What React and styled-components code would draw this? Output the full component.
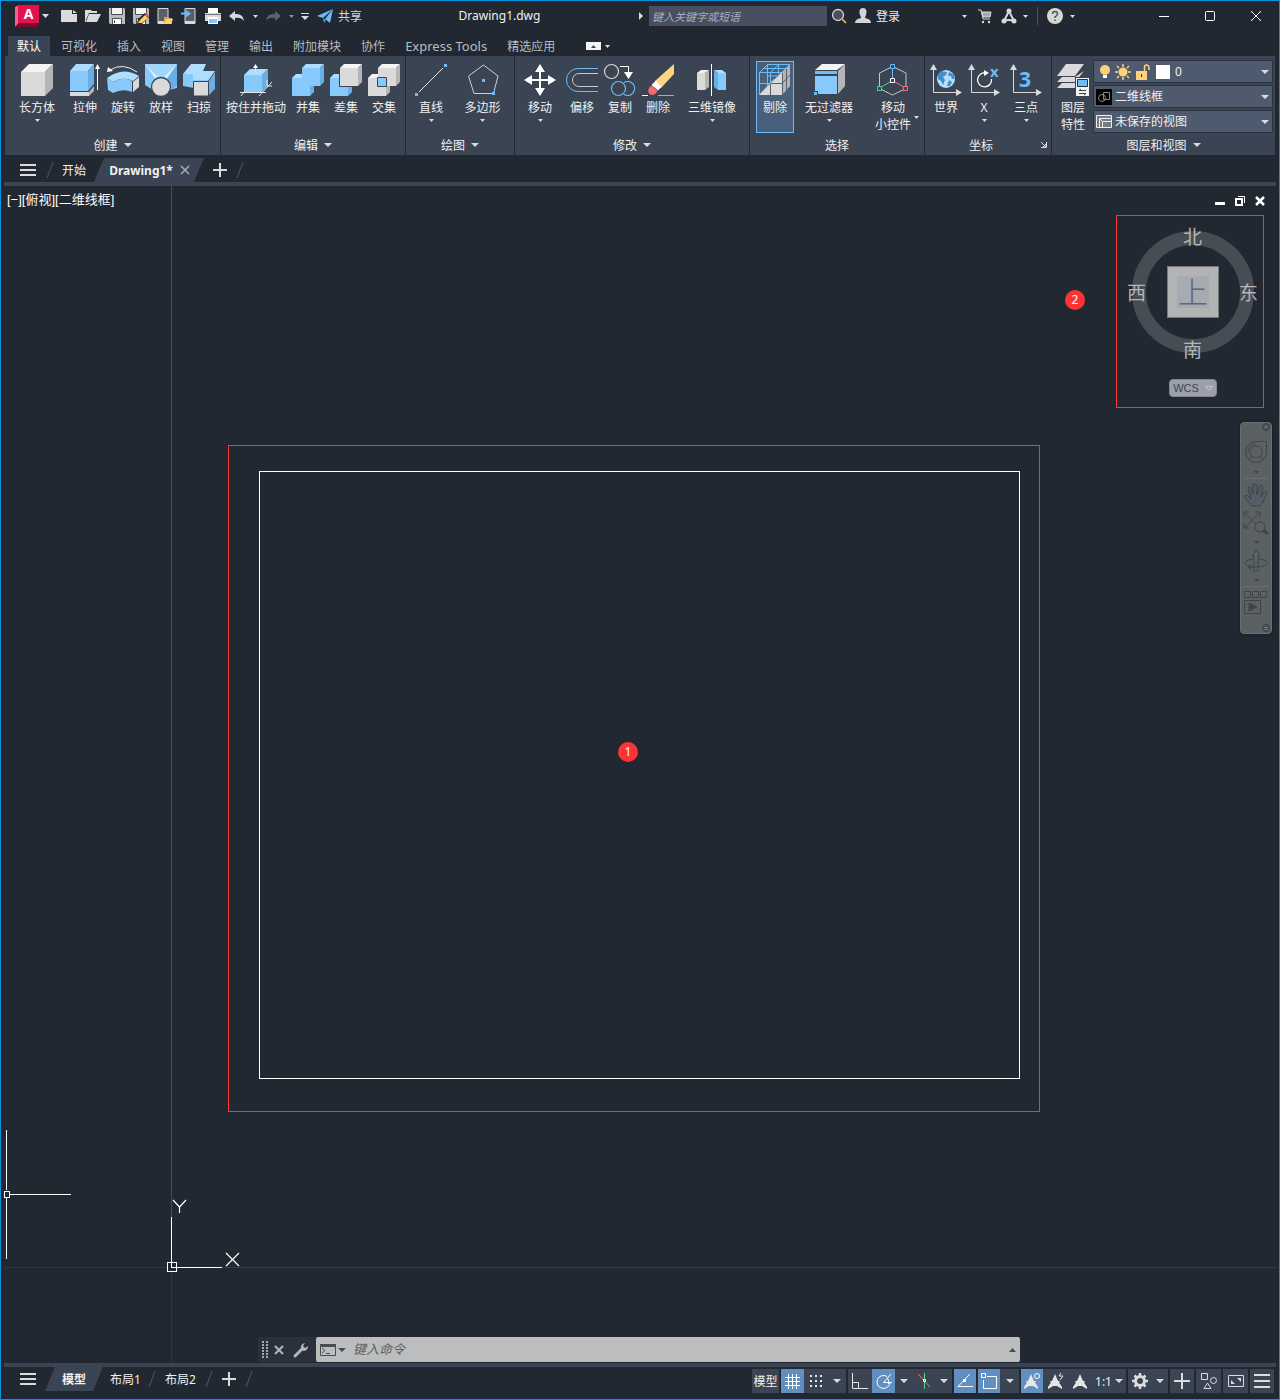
import React from 'react';
import styled, { createGlobalStyle, css } from 'styled-components';

const c = {
  bg: '#222831',
  panel: '#3b4453',
  edge: '#0a93dd',
  text: '#f0f0f0',
  dim: '#b9bdc2',
  icon: '#dcdcdc',
  blue: '#87c9fb',
  blueTop: '#aeddff',
  blueSide: '#69afe5',
  line: '#6cbcf7',
  grey: '#dadada',
  greyTop: '#f4f4f4',
  greySide: '#b5b5b5',
  active: '#628fc2',
  mark: '#ff3333',
};

const Global = createGlobalStyle`
  * { box-sizing: border-box; }
  body { margin: 0; background: ${c.bg}; }
  body, button, input, select {
    font-family: "Noto Sans", "Noto Sans CJK SC", sans-serif;
    font-size: 12px;
    color: ${c.text};
  }
  button {
    background: none; border: 0; padding: 0; white-space: nowrap;
    display: flex; align-items: center; justify-content: center; flex: none;
  }
  svg { display: block; flex: none; overflow: visible; }
`;

const Window = styled.div`
  min-height: 100vh;
  border: 1px solid ${c.edge};
  display: flex;
  flex-direction: column;
  background: ${c.bg};
  line-height: 16px;
`;

/* ---------- title bar ---------- */
const TitleBar = styled.header`
  height: 30px;
  display: flex;
  align-items: center;
  padding-left: 14px;
`;
const Tools = styled.div`
  display: flex;
  align-items: center;
  flex: none;
`;
const ToolButton = styled.button`
  width: ${(p) => p.$w || 24}px;
  height: 24px;
`;
const ShareButton = styled.button`
  gap: 5px;
  margin-left: 4px;
  height: 24px;
  color: #c3dcf2;
`;
const AppButton = styled.button`
  gap: 3px;
  margin-right: 8px;
`;
const Title = styled.h1`
  flex: 1;
  margin: 0;
  text-align: center;
  font-size: 12px;
  font-weight: 400;
`;
const Search = styled.input`
  width: 178px;
  height: 20px;
  margin-left: 4px;
  padding: 0 3px;
  border: 0;
  background: #474f61;
  &::placeholder { color: #aab0b9; font-size: 11px; font-style: italic; opacity: 1; }
`;
const SignIn = styled.button`
  width: 114px;
  margin: 0 4px;
  padding-right: 2px;
  gap: 5px;
  justify-content: flex-start;
  svg:last-child { margin-left: auto; }
`;
const Rule = styled.span`
  width: 1px;
  height: 18px;
  margin: 0 5px 0 8px;
  background: #4a5465;
`;
const WindowButtons = styled.div`
  display: flex;
  margin-left: 64px;
`;

/* ---------- ribbon ---------- */
const RibbonTabs = styled.nav`
  height: 25px;
  padding-left: 7px;
  display: flex;
  align-items: flex-end;
`;
const RibbonTab = styled.button`
  height: 20px;
  padding: 0 10px;
  color: ${(p) => (p.$on ? '#fff' : c.dim)};
  background: ${(p) => (p.$on ? c.panel : 'none')};
  font-size: ${(p) => (p.$latin ? 13 : 12)}px;
  ${(p) => p.$on && css`padding: 0 9px; margin-right: 1px;`}
`;
const RibbonToggle = styled.button`
  height: 20px;
  margin-left: 21px;
  gap: 4px;
`;
const Ribbon = styled.div`
  display: flex;
  margin: 0 4px;
  background: ${c.panel};
`;
const Panel = styled.section`
  display: flex;
  flex-direction: column;
  flex: ${(p) => (p.$grow ? '1' : 'none')};
  position: relative;
  border-right: ${(p) => (p.$grow ? '0' : `1px solid ${c.bg}`)};
`;
const PanelBody = styled.div`
  display: flex;
  flex: none;
  height: 79px;
  padding: 5px 2px 2px ${(p) => p.$left || 2}px;
`;
const PanelFoot = styled.div`
  display: flex;
  height: 20px;
  align-items: center;
`;
const FootButton = styled.button`
  flex: 1;
  gap: 6px;
`;
const BigButton = styled.button`
  width: ${(p) => p.$w || 38}px;
  height: 72px;
  flex-direction: column;
  justify-content: flex-start;
  line-height: 17px;
  border: 1px solid ${(p) => (p.$on ? '#6cbcf7' : 'transparent')};
  background: ${(p) => (p.$on ? '#48607b' : 'none')};
  padding-top: 2px;
`;
const BigLabel = styled.span`
  margin: 3px 0;
  white-space: pre;
  text-align: center;
`;
const SideArrow = styled.span`
  position: absolute;
  right: 5px;
  top: 60px;
`;
const Combos = styled.div`
  flex: 1;
  min-width: 120px;
  display: flex;
  flex-direction: column;
  gap: 2px;
  margin: -1px 0 0 1px;
`;
const ComboBox = styled.label`
  display: flex;
  align-items: center;
  gap: 3px;
  height: 23px;
  padding: 0 3px 0 2px;
  border: 1px solid #2b3240;
  background: #4e5a6e;
`;
const ComboSelect = styled.select`
  appearance: none;
  flex: 1;
  min-width: 0;
  border: 0;
  padding: 0;
  background: transparent;
`;

/* ---------- document / layout tabs ---------- */
const FileTabs = styled.nav`
  height: 27px;
  padding: 3px 0 0 15px;
  display: flex;
  align-items: center;
`;
const PlainTab = styled.button`
  height: 24px;
  padding: 0 ${(p) => p.$px || 8}px;
`;
const SlantTab = styled.button`
  width: ${(p) => p.$w}px;
  height: 24px;
  gap: 8px;
  background: ${c.panel};
  font-weight: 700;
  clip-path: polygon(10px 0, 100% 0, calc(100% - 10px) 100%, 0 100%);
`;
const TabGap = styled.span`
  width: ${(p) => p.$w}px;
`;
const Strip = styled.div`
  height: 4px;
  margin: 0 3px;
  background: ${c.panel};
`;

/* ---------- drawing area ---------- */
const Canvas = styled.main`
  position: relative;
  flex: 1;
  min-height: 1177px;
  margin: 0 3px;
  overflow: hidden;
`;
const Drawing = styled.svg`
  position: absolute;
  inset: 0;
  width: 100%;
  height: 100%;
`;
const ViewLabels = styled.div`
  position: absolute;
  left: 3px;
  top: 6px;
  display: flex;
  button { font: 13px/16px "Liberation Sans", "Noto Sans CJK SC", sans-serif; color: #fff; }
`;
const ViewButtons = styled.div`
  position: absolute;
  right: 6px;
  top: 3px;
  display: flex;
`;
const Callout = styled.div`
  position: absolute;
  left: 224px;
  top: 259px;
  width: 812px;
  height: 667px;
  border: 1px solid ${c.mark};
`;
const Badge = styled.span`
  position: absolute;
  left: ${(p) => p.$x}px;
  right: ${(p) => p.$r}px;
  top: ${(p) => p.$y}px;
  width: 20px;
  border-radius: 10px;
  background: ${c.mark};
  line-height: 20px;
  text-align: center;
  color: #fff;
`;
const CubeBox = styled.div`
  position: absolute;
  right: 12px;
  top: 29px;
  width: 148px;
  height: 193px;
  border: 1px solid ${c.mark};
`;
const Ring = styled.div`
  position: absolute;
  left: 15px;
  top: 15px;
  width: 122px;
  height: 122px;
  border: 14px solid #474d55;
  border-radius: 50%;
  display: flex;
  align-items: center;
  justify-content: center;
`;
const CubeFace = styled.button`
  width: 52px;
  height: 52px;
  background: #b2b3b4;
  border: 1px solid #777a7c;
  span { width: 32px; background: #a6abb1; color: #5d6876; font-size: 30px; line-height: 32px; font-weight: 300; }
`;
const Compass = styled.button`
  position: absolute;
  left: ${(p) => p.$x}px;
  top: ${(p) => p.$y}px;
  color: #b4b6b7;
  font-size: 19px;
  line-height: 20px;
`;
const Wcs = styled.button`
  position: absolute;
  left: 52px;
  top: 163px;
  width: 48px;
  height: 18px;
  gap: 6px;
  border-radius: 4px;
  border: 1px solid #83879a;
  background: #9c9fac;
  color: #40444f;
  font: 11px/16px "Liberation Sans", sans-serif;
`;
const NavBar = styled.div`
  position: absolute;
  right: 4px;
  top: 236px;
  width: 32px;
  height: 212px;
  border: 1px solid #6b6f71;
  border-radius: 4px;
  background: #5b6063;
  box-shadow: 0 0 3px #14181d;
`;
const CommandBar = styled.div`
  position: absolute;
  left: 254px;
  bottom: 1px;
  width: 762px;
  height: 25px;
  display: flex;
  align-items: center;
  background: #2a303c;
  border-radius: 3px;
`;
const CommandField = styled.label`
  flex: 1;
  height: 25px;
  margin-left: 2px;
  padding: 0 4px;
  display: flex;
  align-items: center;
  gap: 2px;
  background: #bbbdbe;
  border-radius: 2px;
  input {
    flex: 1; border: 0; padding: 0 5px 2px; background: transparent; color: #333; font-size: 13px;
    &::placeholder { color: #5d6062; font-style: italic; opacity: 1; }
  }
`;

/* ---------- status bar ---------- */
const Footer = styled.footer`
  height: 32px;
  padding: 0 5px 0 15px;
  display: flex;
  justify-content: space-between;
`;
const LayoutTabs = styled.nav`
  height: 24px;
  display: flex;
  align-items: center;
`;
const Status = styled.div`
  display: flex;
  height: 24px;
  margin-top: 2px;
  gap: 2px;
`;
const StatusGroup = styled.div`
  display: flex;
  background: ${c.panel};
`;
const StatusButton = styled.button`
  width: ${(p) => p.$w || 24}px;
  height: 24px;
  gap: 3px;
  background: ${(p) => (p.$on ? c.active : c.panel)};
`;

/* ---------- icons ---------- */
const Caret = ({ w = 5, h = 3, fill = c.icon, up }) => (
  <svg width={w} height={h} viewBox="0 0 10 6" preserveAspectRatio="none">
    <path d={up ? 'M0 6L5 0L10 6Z' : 'M0 0H10L5 6Z'} fill={fill} />
  </svg>
);
const Svg = ({ s = 16, w, h, children }) => (
  <svg width={w || s} height={h || s} viewBox={`0 0 ${w || s} ${h || s}`} fill="none">{children}</svg>
);
const Slash = () => <Svg w={8} h={16}><path d="M1 16L7 0" stroke="#4d5664" /></Svg>;
const Plus = () => <Svg w={14} h={14}><path d="M7 0V14M0 7H14" stroke={c.icon} strokeWidth="2" /></Svg>;
const Menu = () => <Svg w={16} h={12}><path d="M0 1H16M0 6H16M0 11H16" stroke={c.icon} strokeWidth="2" /></Svg>;

const Box = ({ x, y, s, d, t = c.greyTop, f = c.grey, r = c.greySide, h = s }) => (
  <g>
    <path d={`M${x} ${y + d}l${d} ${-d}h${s}l${-d} ${d}z`} fill={t} />
    <path d={`M${x + s} ${y + d}l${d} ${-d}v${h}l${-d} ${d}z`} fill={r} />
    <path d={`M${x} ${y + d}h${s}v${h}h${-s}z`} fill={f} />
  </g>
);
const blueBox = { t: c.blueTop, f: c.blue, r: c.blueSide };
const Axes = ({ children }) => (
  <Svg s={32}>
    <path d="M3.5 5V28.5H27" stroke={c.grey} strokeWidth="1" />
    <path d="M0 6L3.5 0L7 6ZM26 25L32 28.5L26 32Z" fill={c.grey} />
    {children}
  </Svg>
);

const art = {
  box: <Svg s={32}><Box x={0} y={0} s={24} d={8} /></Svg>,
  extrude: (
    <Svg s={32}>
      <path d="M1 28H20V32H1Z" fill={c.grey} /><path d="M20 28L25 22V27L20 32Z" fill={c.greySide} />
      <path d="M1 7L7 0H25L19 7Z" fill={c.blueTop} /><path d="M19 7L25 0V20L19 27Z" fill={c.blueSide} />
      <path d="M1 7H19V27H1Z" fill={c.blue} />
      <path d="M28.5 3V26" stroke="#fff" /><path d="M26 5L28.5 0L31 5Z" fill="#fff" />
    </Svg>
  ),
  revolve: (
    <Svg s={32}>
      <path d="M3 6Q16 -2 30 8" stroke="#f0f0f0" /><path d="M0 8L1 3L6 7Z" fill="#fff" />
      <path d="M0 14Q16 2 32 12L26 17Q16 12 6 18Z" fill={c.blueTop} />
      <path d="M0 14L6 18Q16 12 25 17V28Q16 24 6 29L1 26Z" fill={c.blue} />
      <path d="M26 18L32 13V23L26 28Z" fill={c.grey} />
    </Svg>
  ),
  loft: (
    <Svg s={32}>
      <path d="M0 0H32V24L24 26H8L0 21Z" fill={c.blue} />
      <path d="M32 0V22L25 26L22 14Z" fill={c.blueSide} />
      <path d="M0 0H32L22 15H10Z" fill="#a1d6fc" /><path d="M0 0L10 14L13 13Z" fill="#d8eefc" /><path d="M32 0L22 14L19 13Z" fill="#d8eefc" />
      <circle cx="16" cy="23" r="9.5" fill={c.grey} stroke={c.panel} strokeWidth="1.3" />
    </Svg>
  ),
  sweep: (
    <Svg s={32}>
      <path d="M0 10L8 0H23L20 7H32L25 17H10L9 10Z" fill={c.blueTop} />
      <path d="M0 10H10V16H25V18H11V24L0 22Z" fill={c.blue} />
      <path d="M26 17L32 8V25L26 31Z" fill={c.blueSide} />
      <path d="M10.5 17.5H25.5V32H10.5Z" fill={c.grey} stroke={c.panel} />
    </Svg>
  ),
  press: (
    <Svg s={32}>
      <Box x={4} y={5} s={18} d={6} h={17} {...blueBox} />
      <path d="M15.5 3V9M0 28.5H26M1 32L5 27M19 32L32 18M27 16V22H32" stroke="#e4e4e4" />
      <path d="M13 4L15.5 0L18 4Z" fill="#fff" />
    </Svg>
  ),
  union: (
    <Svg s={32}>
      <Box x={0} y={10} s={18} d={4} h={18} {...blueBox} /><Box x={10} y={0} s={18} d={4} h={18} {...blueBox} />
      <path d="M8 16H18V26H8Z" fill={c.blue} />
    </Svg>
  ),
  subtract: (
    <Svg s={32}>
      <Box x={0} y={10} s={18} d={4} h={18} {...blueBox} />
      <path d="M9 3L13 0H32V19L28 23H9Z" fill={c.panel} />
      <Box x={10} y={0} s={18} d={4} h={18} />
    </Svg>
  ),
  intersect: (
    <Svg s={32}>
      <Box x={0} y={10} s={18} d={4} h={18} /><Box x={10} y={0} s={18} d={4} h={18} />
      <path d="M9.5 13.5H18.5V22.5H9.5Z" fill={c.blue} stroke={c.panel} />
    </Svg>
  ),
  line: <Svg s={32}><path d="M4 28L28 4" stroke="#e4e4e4" /><path d="M0 29H3V32H0ZM29 0H32V3H29Z" fill={c.line} /></Svg>,
  polygon: (
    <Svg s={32}><path d="M16.5 1L31 12L26.5 29.5H7L1.5 12Z" stroke="#d0d0d0" />
      <path d="M15 15H18V18H15ZM25 28H28V31H25Z" fill={c.line} /></Svg>
  ),
  move: (
    <Svg s={32}><path d="M16 5V27M5 16H27" stroke="#fff" strokeWidth="2" />
      <path d="M11 8L16 0L21 8ZM11 24L16 32L21 24ZM8 11L0 16L8 21ZM24 11L32 16L24 21Z" fill="#fff" /></Svg>
  ),
  offset: (
    <Svg s={32}><path d="M32 4.5H12A11.5 11.5 0 0 0 12 27.5H32" stroke={c.line} />
      <path d="M32 9.5H13A6.5 6.5 0 0 0 13 22.5H32" stroke="#c8c8c8" /></Svg>
  ),
  copy: (
    <Svg s={32}><circle cx="7.5" cy="7.5" r="7" stroke="#d6d6d6" strokeWidth="1.2" /><path d="M16 2.5H24.5V9" stroke="#fff" />
      <path d="M20 8H29L24.5 15Z" fill="#fff" />
      <circle cx="14.5" cy="24.5" r="7" stroke={c.line} strokeWidth="1.2" /><path d="M20 18.5A7 7 0 1 1 20 30.5" stroke={c.line} strokeWidth="1.2" /></Svg>
  ),
  erase: (
    <Svg s={32}><path d="M32 0V10L19 24L13 17Z" fill="#ffd480" /><path d="M14 16.5L19.5 23L16 26.5L9.5 21Z" fill="#fff" />
      <path d="M9.5 21.5L15.5 27Q12 33 7.5 30Q4 26 9.5 21.5Z" fill="#f76b70" />
      <path d="M0 31.5H6" stroke="#fff" /><path d="M16 31.5H32" stroke={c.line} /></Svg>
  ),
  mirror: (
    <Svg s={32}>
      <path d="M1 9L5 6H13L9 9Z" fill={c.greyTop} /><path d="M1 9H9V26H1Z" fill={c.grey} /><path d="M9 9L13 6V23L9 26Z" fill={c.greySide} />
      <path d="M15.5 0V32" stroke="#fff" />
      <path d="M18 6H26L30 9H22Z" fill={c.blueTop} /><path d="M22 9H30V26H22Z" fill={c.blue} /><path d="M18 6L22 9V26L18 23Z" fill={c.blueSide} />
    </Svg>
  ),
  cull: (
    <Svg s={32}>
      <path d="M0 31L23 8V31Z" fill={c.grey} /><path d="M23 8L31 0V22L23 31Z" fill={c.greySide} />
      <path d="M0.5 31V8.5H22M0.5 8.5L8.5 0.5H31L23 8.5M0 19.5H11M11.5 8V19M4.5 4.5H27M11.5 8.5L19.5 0.5M8.5 0V22L0 31L23 8M8.5 22L15 15M19.5 0V10M8 12H19" stroke={c.line} />
      <path d="M11.5 20V31M12 19.5H23L31 11M23.5 9V31M27.5 5V26" stroke="#555f6e" />
    </Svg>
  ),
  filter: (
    <Svg s={32}>
      <path d="M2 6L9 0H32L24 6Z" fill={c.greyTop} /><path d="M25 7L32 0V22L25 30Z" fill={c.greySide} />
      <path d="M2 7H24V10H2Z" fill={c.line} /><path d="M2 12H24V30H2Z" fill={c.blue} />
      <path d="M0 27H5V32H0Z" fill={c.panel} /><path d="M1 28H4V31H1Z" fill={c.line} />
    </Svg>
  ),
  gizmo: (
    <Svg s={32}>
      <path d="M15.5 2.5L29 9V24.5L15.5 31L2.5 24.5V9Z" stroke="#c6c6c6" />
      <path d="M15.5 16V4" stroke={c.line} /><path d="M15.5 16.5L2.5 24" stroke="#51d88a" /><path d="M15.5 16.5L28.5 24" stroke="#f07178" />
      <path d="M13.5 0.5H17.5V4.5H13.5Z" fill={c.panel} stroke={c.line} />
      <path d="M13.5 14.5H17.5V18.5H13.5Z" fill={c.panel} stroke="#fff" />
      <path d="M0.5 22.5H4.5V26.5H0.5Z" fill={c.panel} stroke="#51d88a" />
      <path d="M26.5 22.5H30.5V26.5H26.5Z" fill={c.panel} stroke="#f07178" />
    </Svg>
  ),
  world: (
    <Axes><circle cx="16" cy="15" r="9" fill="#b7e0fd" />
      <path d="M8 11L11 7L17 8L16 11L13 13L15 16L13 21L11 17L8 15ZM19 8L23 10L25 15L22 15L21 12L18 12ZM19 16L22 18L20 22L17 22Z" fill="#3f8fcb" /></Axes>
  ),
  rotX: (
    <Axes><path d="M18 9A7 7 0 1 0 23.5 15" stroke="#fff" strokeWidth="1.3" /><path d="M16 6L21 9L16 12Z" fill="#fff" />
      <text x="22" y="13" fill={c.line} fontSize="15" fontWeight="700" fontFamily="Noto Sans">x</text></Axes>
  ),
  three: <Axes><text x="9" y="23" fill={c.line} fontSize="21" fontWeight="700" fontFamily="Noto Sans">3</text></Axes>,
  layers: (
    <Svg s={32}>
      <path d="M9 0H27L18 12H0Z" fill={c.grey} /><path d="M5 13H18L27 7L18 18H0Z" fill={c.grey} /><path d="M5 19H18V24H0Z" fill={c.grey} />
      <path d="M18 13H32V32H18Z" fill={c.panel} /><path d="M19 14H32V32H19Z" fill={c.greyTop} />
      <path d="M20.5 15.5H30.5V22.5H20.5Z" fill={c.line} stroke="#2b3240" />
      <path d="M22 26.5H29M22 29.5H29M24 25L22 26.5M27 31L29 29.5" stroke="#444" />
    </Svg>
  ),
};

const Logo = () => (
  <svg width="24" height="22" viewBox="0 0 24 22">
    <path d="M0 2L4 0V18L0 22Z" fill="#f4648a" /><path d="M0 22L4 18H24L22 22Z" fill="#7d0a26" />
    <path d="M3 0H24V18H3Z" fill="#e51050" />
    <text x="13.5" y="14" fill="#fff" fontSize="14" fontWeight="700" fontFamily="Noto Sans" textAnchor="middle">A</text>
  </svg>
);
const phone = <><path d="M4 0.5H14V15.5H4Z" fill="#5a5f66" stroke={c.grey} /><path d="M4 13H14V16H4Z" fill={c.grey} /></>;
const floppy = <><path d="M0 0H15L16 1V16H1L0 15Z" fill="#b9bbbd" /><path d="M3 0H13V6H3Z" fill="#f4f4f4" /><path d="M2.5 0V6.500H13.500V0M3.500 16V10.500H12.500V16" stroke="#4b5058" /><path d="M4 11H12V16H4Z" fill="#fff" /><path d="M5.5 12.5V15" stroke="#333" /></>;
const fileTools = [
  ['新建', <Svg><path d="M0 2H11V6H16V14H0Z" fill={c.grey} /><path d="M12 2L16 5H12Z" fill={c.grey} /></Svg>],
  ['打开', <Svg><path d="M0 2H6L7 3H12V5H4L1 12V14H0Z" fill={c.grey} /><path d="M4 6H16L12 14H1Z" fill={c.grey} /></Svg>],
  ['保存', <Svg>{floppy}</Svg>],
  ['另存为', <Svg>{floppy}<path d="M4 16L5 11L12 5L16 9L9 16Z" fill={c.bg} /><path d="M5 15L7 12L12 7L15 10L9 15Z" fill="#ffd06e" /><path d="M12 7L14 5L16 8L15 10Z" fill="#ef5b64" /></Svg>],
  ['从移动设备打开', <Svg><g transform="translate(-3 0)">{phone}</g><path d="M7 9H11L12 10H15V16H7Z" fill="#d9a545" /><path d="M9 11H16L14 16H7Z" fill="#ffd27a" /></Svg>],
  ['保存到移动设备', <Svg>{phone}<path d="M0 5.5H7" stroke="#6cbcf7" strokeWidth="2" /><path d="M5 2L10 5.5L5 9.5Z" fill="#6cbcf7" /></Svg>],
  ['打印', <Svg><path d="M3 0H13V5H3Z" fill="#fff" /><path d="M0 5H16V13H0Z" fill={c.grey} /><path d="M0 6.5H16" stroke="#73777c" /><path d="M3 9H13V16H3Z" fill="#fff" /><path d="M4 11H12V15H4Z" fill="#85c8fb" /></Svg>],
  ['放弃', <Svg><path d="M0 8L6 3V6Q14 5 15 13Q12 9 6 10V13Z" fill="#d8d8d8" /></Svg>],
];
const ribbonPanels = [
  { name: '创建', left: 3, arrow: true, items: [['长方体', 'box', 58, 1], ['拉伸', 'extrude'], ['旋转', 'revolve'], ['放样', 'loft'], ['扫掠', 'sweep']] },
  { name: '编辑', arrow: true, items: [['按住并拖动', 'press', 66], ['并集', 'union'], ['差集', 'subtract'], ['交集', 'intersect']] },
  { name: '绘图', left: 3, arrow: true, items: [['直线', 'line', 44, 1], ['多边形', 'polygon', 59, 1]] },
  { name: '修改', arrow: true, items: [['移动', 'move', 46, 1], ['偏移', 'offset'], ['复制', 'copy'], ['删除', 'erase'], ['三维镜像', 'mirror', 70, 1]] },
  { name: '选择', left: 6, items: [['剔除', 'cull', 38, 0, 1], ['无过滤器', 'filter', 70, 1], ['移动\n小控件', 'gizmo', 58, 2]] },
  { name: '坐标', launch: true, items: [['世界', 'world'], ['X', 'rotX', 38, 1], ['三点', 'three', 46, 1]] },
];

const ArrowA = ({ children }) => (
  <Svg w={18} h={18}><path d="M8 2L11 9L15 15V17L10 14H6L1 17V15L5 9Z" fill="#e6e6e6" /><path d="M3 10L6 9M13 10L10 9" stroke="#e6e6e6" />{children}</Svg>
);

const navInk = '#3e4449';
function NavArt() {
  return (
    <svg width="30" height="210" viewBox="1 1 30 210" fill="none" stroke={navInk}>
      <circle cx="26" cy="5" r="3.5" fill="#4b5054" /><path d="M24.5 3.5L27.5 6.5M27.5 3.5L24.5 6.5" stroke="#74787a" />
      <path d="M16 19.5H26.5V30A10.5 10.5 0 1 1 16 19.5Z" /><circle cx="16" cy="30" r="6" /><path d="M9 38L12 34M23 38L20 34M16 22A8 8 0 0 0 8 30" />
      <path d="M3 56.5H29M3 164.5H29" stroke="#686d6f" />
      <path d="M14 49H19L16.5 52ZM14 119H19L16.5 122ZM14 157H19L16.5 160Z" fill={navInk} stroke="none" />
      <path d="M11 83L5 76Q4 72 8 74L11 77L8 66Q9 63 11 66L13 73L13 63Q15 60 17 63V73L20 64Q22 62 23 65L21 75L24 70Q27 68 27 71L23 80L20 84H12Z" fill="#565d66" />
      <path d="M5 91L19 105M20 90L5 106M4 95V90H9M15 90H20V95M4 101V106H9" /><circle cx="20" cy="105" r="5" fill="#5b6063" /><path d="M23 108L28 112" strokeWidth="3" />
      <path d="M14 149V134H12L16.5 128L20 134H18V149Z" fill="#5b6469" /><path d="M13 137C2 138 3 145 13 145M19 137C30 138 30 144 19 145H9M11 142L8 145L11 148" />
      <path d="M4.5 169.5H10.5V175.5H4.5ZM12.5 169.5H18.5V175.5H12.5ZM20.5 169.5H26.5V175.5H20.5ZM4.5 178.5H20.5V191.5H4.5Z" /><path d="M9 181L17 185L9 189Z" fill={navInk} />
      <circle cx="26" cy="206" r="3.5" fill="#4b5054" /><path d="M24 205.5H28M24 207.5H28" stroke="#74787a" />
    </svg>
  );
}

export default function App() {
  return (
    <Window>
      <Global />
      <TitleBar>
        <Tools>
          <AppButton aria-label="应用程序菜单"><Logo /><Caret w={7} h={4} /></AppButton>
          {fileTools.map(([name, icon]) => <ToolButton key={name} aria-label={name}>{icon}</ToolButton>)}
          <ToolButton $w={12} aria-label="放弃列表"><Caret /></ToolButton>
          <ToolButton aria-label="重做"><Svg><path d="M16 8L10 3V6Q2 5 1 13Q4 9 10 10V13Z" fill="#5b626b" /></Svg></ToolButton>
          <ToolButton $w={12} aria-label="重做列表"><Caret fill="#8d9298" /></ToolButton>
          <ToolButton $w={16} aria-label="自定义快速访问工具栏"><Svg w={8} h={7}><path d="M0 0.5H8" stroke={c.icon} /><path d="M0 3H8L4 7Z" fill={c.icon} /></Svg></ToolButton>
          <ShareButton>
            <Svg><path d="M0 8L16 1L6 10Z" fill="#6cbcf7" /><path d="M16 1L13 15L8 11Z" fill="#6cbcf7" /><path d="M6 10L7 15L9 12Z" fill="#4f9ad2" /></Svg>
            共享
          </ShareButton>
        </Tools>
        <Title>Drawing1.dwg</Title>
        <Tools>
          <ToolButton $w={8} aria-label="收拢搜索"><Svg w={4} h={8}><path d="M0 0L4 4L0 8Z" fill={c.icon} /></Svg></ToolButton>
          <Search aria-label="搜索" placeholder="键入关键字或短语" />
          <ToolButton aria-label="查找"><Svg><circle cx="7" cy="7" r="5.5" fill="#48515c" stroke="#d6d6d6" strokeWidth="1.3" /><path d="M11 11L15 15" stroke="#d49a58" strokeWidth="1.8" /></Svg></ToolButton>
          <SignIn>
            <Svg><path d="M8 0C4 0 4 4 5 7Q6 9 6 10Q0 11 0 15H16Q16 11 10 10Q10 9 11 7C12 4 12 0 8 0Z" fill="#d4d4d4" /></Svg>
            登录<Caret />
          </SignIn>
          <ToolButton aria-label="购物车"><Svg><path d="M1 2H4L6 11H13" stroke={c.grey} /><path d="M5 4H14L13 9H6Z" fill="#aaa" stroke={c.grey} /><circle cx="6" cy="14" r="1.2" fill={c.grey} /><circle cx="12" cy="14" r="1.2" fill={c.grey} /></Svg></ToolButton>
          <ToolButton aria-label="Autodesk App"><Svg><path d="M8 3L3 13Q8 11 13 13Z" stroke={c.grey} strokeWidth="2" /><circle cx="8" cy="3" r="2.5" fill={c.grey} /><circle cx="3" cy="13" r="2.5" fill={c.grey} /><circle cx="13" cy="13" r="2.5" fill={c.grey} /></Svg></ToolButton>
          <ToolButton $w={8} aria-label="App 列表"><Caret /></ToolButton>
          <Rule />
          <ToolButton aria-label="帮助"><Svg><circle cx="8" cy="8" r="8" fill="#d6d6d6" /><path d="M5.5 6Q5.5 3.5 8 3.5T10.5 6Q10.5 7.5 8 9V10M8 11.5V13" stroke="#555" strokeWidth="1.5" /></Svg></ToolButton>
          <ToolButton $w={10} aria-label="帮助列表"><Caret /></ToolButton>
          <WindowButtons>
            <ToolButton $w={46} aria-label="最小化"><Svg s={10}><path d="M0 5.5H10" stroke="#fff" /></Svg></ToolButton>
            <ToolButton $w={46} aria-label="最大化"><Svg s={10}><rect x="0.5" y="0.5" width="9" height="9" rx="1" stroke="#fff" /></Svg></ToolButton>
            <ToolButton $w={46} aria-label="关闭"><Svg s={10}><path d="M0 0L10 10M10 0L0 10" stroke="#fff" /></Svg></ToolButton>
          </WindowButtons>
        </Tools>
      </TitleBar>

      <RibbonTabs>
        {['默认', '可视化', '插入', '视图', '管理', '输出', '附加模块', '协作', 'Express Tools', '精选应用'].map((t, i) => (
          <RibbonTab key={t} $on={i === 0} $latin={t === 'Express Tools'}>{t}</RibbonTab>
        ))}
        <RibbonToggle aria-label="最小化功能区">
          <Svg w={15} h={8}><path d="M0 0H15V8H0Z" fill="#f4f4f4" /><path d="M5 6L7.5 3L10 6Z" fill="#444" /></Svg><Caret />
        </RibbonToggle>
      </RibbonTabs>

      <Ribbon>
        {ribbonPanels.map((p) => (
          <Panel key={p.name}>
            <PanelBody $left={p.left}>
              {p.items.map(([label, icon, w, arrow, on]) => (
                <BigButton key={label} $w={w} $on={on}>
                  {art[icon]}
                  <BigLabel>{label}</BigLabel>
                  {arrow === 1 && <Caret />}
                  {arrow === 2 && <SideArrow><Caret /></SideArrow>}
                </BigButton>
              ))}
            </PanelBody>
            <PanelFoot>
              <FootButton>{p.name}{p.arrow && <Caret w={8} h={4} />}</FootButton>
              {p.launch && <ToolButton $w={14} aria-label="坐标设置"><Svg s={6}><path d="M0 0L4 4M5.5 0V5.5H0M5 2V5H2Z" stroke={c.grey} /></Svg></ToolButton>}
            </PanelFoot>
          </Panel>
        ))}
        <Panel $grow>
          <PanelBody>
            <BigButton>{art.layers}<BigLabel>{'图层\n特性'}</BigLabel></BigButton>
            <Combos>
              <ComboBox>
                <Svg w={57} h={18}>
                  <circle cx="9" cy="7" r="5" fill="#ffd27a" /><path d="M7 12H11V15H7Z" fill="#fff" />
                  <circle cx="27" cy="9" r="4.5" fill="#ffd27a" /><path d="M27 1V4M27 14V17M19 9H22M32 9H35M21 3L23 5M33 3L31 5M21 15L23 13M33 15L31 13" stroke="#ffd27a" strokeWidth="1.5" />
                  <path d="M40 8H51V17H40Z" fill="#ffd27a" /><path d="M48.5 8V4Q48.5 2 50.5 2T53 4V7" stroke="#ffd27a" strokeWidth="1.5" /><path d="M45.5 11V14" stroke="#333" />
                </Svg>
                <Svg s={16}><path d="M0 1H14V15H0Z" fill="#fff" /></Svg>
                <ComboSelect aria-label="图层"><option>0</option></ComboSelect><Caret w={8} h={4} />
              </ComboBox>
              <ComboBox>
                <Svg><path d="M0 0H16V16H0Z" fill="#000" /><circle cx="6" cy="9" r="3.5" stroke="#888" /><path d="M7.5 3.5H13.5V10.5H7.5Z" stroke="#888" /></Svg>
                <ComboSelect aria-label="视觉样式"><option>二维线框</option></ComboSelect><Caret w={8} h={4} />
              </ComboBox>
              <ComboBox>
                <Svg><path d="M0.5 1.5H15.5V13.5H0.5Z" fill="#777b80" stroke="#eee" /><path d="M3.500 13V4.500H15M3.500 4.500L6.500 7.500V13M6.500 7.500H15" stroke="#eee" /></Svg>
                <ComboSelect aria-label="视图"><option>未保存的视图</option></ComboSelect><Caret w={8} h={4} />
              </ComboBox>
            </Combos>
          </PanelBody>
          <PanelFoot><FootButton>图层和视图<Caret w={8} h={4} /></FootButton></PanelFoot>
        </Panel>
      </Ribbon>

      <FileTabs>
        <ToolButton aria-label="文件选项卡菜单"><Menu /></ToolButton>
        <TabGap $w={6} /><Slash />
        <PlainTab>开始</PlainTab>
        <SlantTab $w={110}>Drawing1*<Svg s={8}><path d="M0 0L8 8M8 0L0 8" stroke="#a9adb2" strokeWidth="1.5" /></Svg></SlantTab>
        <PlainTab $px={9} aria-label="新图形"><Plus /></PlainTab><Slash />
      </FileTabs>
      <Strip />

      <Canvas>
        <Drawing>
          <g shapeRendering="crispEdges" fill="none">
            <path d="M167.5 0V1031" stroke="#1f6a24" />
            <path d="M167.5 1086V1177M0 1081.5H164" stroke="#2d3441" />
            <path d="M218 1081.5H4000" stroke="#66282d" />
            <path d="M167.5 1031V1081.5H218" stroke="#fff" />
            <path d="M163.5 1076.5H172.5V1085.5H163.5Z" stroke="#fff" />
            <path d="M2.5 944V1004M2.5 1012V1073M6 1008.5H67M0.5 1005.5H5.5V1011.5H0.5Z" stroke="#fff" />
            <path d="M255.5 285.5H1015.5V892.5H255.5Z" stroke="#fff" />
          </g>
          <path d="M169 1014L175.5 1021L182 1014M175.5 1021V1027M222 1067L235 1080M235 1067L222 1080" stroke="#fff" strokeWidth="1.200" fill="none" />
        </Drawing>
        <ViewLabels><button>[−]</button><button>[俯视]</button><button>[二维线框]</button></ViewLabels>
        <ViewButtons>
          <ToolButton $w={20} aria-label="最小化视图"><Svg s={12}><path d="M1 7H11V10H1Z" fill="#fff" /></Svg></ToolButton>
          <ToolButton $w={20} aria-label="还原视图"><Svg s={12}><path d="M4 1.5H10.5V8" stroke="#fff" /><path d="M2 4H8V10H2Z" stroke="#fff" strokeWidth="2" /></Svg></ToolButton>
          <ToolButton $w={20} aria-label="关闭视图"><Svg s={12}><path d="M2 2L10 10M10 2L2 10" stroke="#fff" strokeWidth="2.5" /></Svg></ToolButton>
        </ViewButtons>
        <Callout />
        <Badge $x={614} $y={556}>1</Badge>
        <Badge $r={191} $y={104}>2</Badge>
        <CubeBox>
          <Ring><CubeFace><span>上</span></CubeFace></Ring>
          <Compass $x={66} $y={11}>北</Compass>
          <Compass $x={66} $y={124}>南</Compass>
          <Compass $x={10} $y={67}>西</Compass>
          <Compass $x={122} $y={67}>东</Compass>
          <Wcs>WCS<Svg w={8} h={5}><path d="M0.500 0.500H7.500L4 4.500Z" stroke="#c3c6d0" /></Svg></Wcs>
        </CubeBox>
        <NavBar><NavArt /></NavBar>
        <CommandBar>
          <Svg w={12} h={18}><path d="M5 0V18M9 0V18" stroke="#aaa" strokeWidth="2" strokeDasharray="2 1" /></Svg>
          <ToolButton $w={18} aria-label="关闭命令行"><Svg s={8}><path d="M0 0L8 8M8 0L0 8" stroke="#b4b6b8" strokeWidth="2" /></Svg></ToolButton>
          <ToolButton $w={26} aria-label="自定义"><Svg w={16} h={16}><path d="M2 14L9 7" stroke="#b4b6b8" strokeWidth="3" strokeLinecap="round" /><path d="M12 1Q7 2 8 7L10 9Q15 9 15 4L12 6L10 4Z" fill="#b4b6b8" /></Svg></ToolButton>
          <CommandField>
            <Svg w={16} h={12}><path d="M0.5 0.5H15.5V11.5H0.5Z" stroke="#4a4d50" /><path d="M0 0H16V3H0Z" fill="#4a4d50" /><path d="M2 4L5 6.5L2 9M6 9.5H10" stroke="#4a4d50" /></Svg>
            <Caret w={8} h={4} fill="#4a4d50" />
            <input aria-label="命令" placeholder="键入命令" />
            <Caret w={7} h={4} fill="#4a4d50" up />
          </CommandField>
        </CommandBar>
      </Canvas>

      <Strip />
      <Footer>
        <LayoutTabs>
          <ToolButton aria-label="布局菜单"><Menu /></ToolButton>
          <TabGap $w={5} />
          <SlantTab $w={58}>模型</SlantTab>
          <PlainTab $px={7}>布局1</PlainTab><Slash />
          <PlainTab $px={9}>布局2</PlainTab><Slash />
          <PlainTab $px={9} aria-label="新布局"><Plus /></PlainTab><Slash />
        </LayoutTabs>
        <Status>
          <StatusButton $w={27}>模型</StatusButton>
          <StatusGroup>
            <StatusButton $on $w={23} aria-label="栅格"><Svg s={15}><path d="M3.5 0V15M7.5 0V15M11.5 0V15M0 3.5H15M0 7.5H15M0 11.5H15" stroke="#fff" /></Svg></StatusButton>
            <StatusButton aria-label="捕捉"><Svg s={12}><path d="M1 0V12M6 0V12M11 0V12" stroke="#e6e6e6" strokeWidth="2" strokeDasharray="2 3" /></Svg></StatusButton>
            <StatusButton $w={18} aria-label="捕捉设置"><Caret w={8} h={4} /></StatusButton>
          </StatusGroup>
          <StatusGroup>
            <StatusButton aria-label="正交"><Svg><path d="M0.5 0V15.5H16M1 9.5H6.5V15" stroke="#e6e6e6" /></Svg></StatusButton>
            <StatusButton $on $w={23} aria-label="极轴"><Svg><path d="M14 9A6.500 6.500 0 1 1 11 3.500M7.5 9.5H16M7.5 9.5L15 1M11.5 5Q13 7 12.5 11" stroke="#fff" /></Svg></StatusButton>
            <StatusButton $w={18} aria-label="极轴设置"><Caret w={8} h={4} /></StatusButton>
            <StatusButton $w={22} aria-label="等轴测"><Svg><path d="M2 1L14 14" stroke="#f07178" /><path d="M8.5 0V6M8.5 9V16" stroke="#51d88a" /><path d="M7.5 6.5H9.5V8.5H7.5Z" stroke="#fff" /></Svg></StatusButton>
            <StatusButton $w={17} aria-label="等轴测设置"><Caret w={8} h={4} /></StatusButton>
          </StatusGroup>
          <StatusButton $on $w={22} aria-label="对象捕捉追踪"><Svg><path d="M13 1L1 13.5H16" stroke="#fff" /><path d="M6 6H9V9H6Z" fill="#fff" /></Svg></StatusButton>
          <StatusGroup>
            <StatusButton $on $w={22} aria-label="对象捕捉"><Svg><path d="M6 3.5H15.5V15.5H2.5V7" stroke="#fff" /><path d="M0.5 0.5H4.5V4.5H0.5Z" stroke="#fff" /></Svg></StatusButton>
            <StatusButton $w={19} aria-label="对象捕捉设置"><Caret w={8} h={4} /></StatusButton>
          </StatusGroup>
          <StatusGroup>
            <StatusButton $on $w={22} aria-label="注释可见性"><ArrowA><circle cx="14" cy="4" r="2.5" stroke="#fff" /></ArrowA></StatusButton>
            <StatusButton $w={26} aria-label="自动缩放"><ArrowA><path d="M14 1L12 4H16L13 8" stroke="#e6e6e6" /></ArrowA></StatusButton>
            <StatusButton $w={23} aria-label="注释比例"><ArrowA /></StatusButton>
            <StatusButton $w={34}>1:1<Caret w={8} h={4} /></StatusButton>
          </StatusGroup>
          <StatusGroup>
            <StatusButton aria-label="切换工作空间"><Svg><circle cx="8" cy="8" r="4.5" stroke={c.icon} strokeWidth="3" /><path d="M8 0V3M8 13V16M0 8H3M13 8H16M2.5 2.5L4.5 4.5M11.5 11.5L13.5 13.5M13.5 2.5L11.5 4.5M2.5 13.5L4.5 11.5" stroke={c.icon} strokeWidth="2.5" /></Svg></StatusButton>
            <StatusButton $w={16} aria-label="工作空间列表"><Caret w={8} h={4} /></StatusButton>
          </StatusGroup>
          <StatusButton aria-label="注释监视器"><Svg><path d="M8 0V16M0 8H16" stroke={c.icon} strokeWidth="2" /></Svg></StatusButton>
          <StatusButton $w={25} aria-label="隔离对象"><Svg><path d="M0.5 0.5H6.5V6.5H0.5ZM6.5 10L10 15.5H3Z" stroke={c.icon} /><circle cx="12.5" cy="7.5" r="3" stroke={c.icon} /></Svg></StatusButton>
          <StatusButton $w={25} aria-label="全屏显示"><Svg><path d="M0.5 2.5H15.5V13.5H0.5Z" stroke={c.icon} /><path d="M9 5H13V9ZM3 7V11H7Z" fill={c.icon} /></Svg></StatusButton>
          <StatusButton aria-label="自定义状态栏"><Svg><path d="M0 2H16M0 8H16M0 14H16" stroke={c.icon} strokeWidth="2" /></Svg></StatusButton>
        </Status>
      </Footer>
    </Window>
  );
}
